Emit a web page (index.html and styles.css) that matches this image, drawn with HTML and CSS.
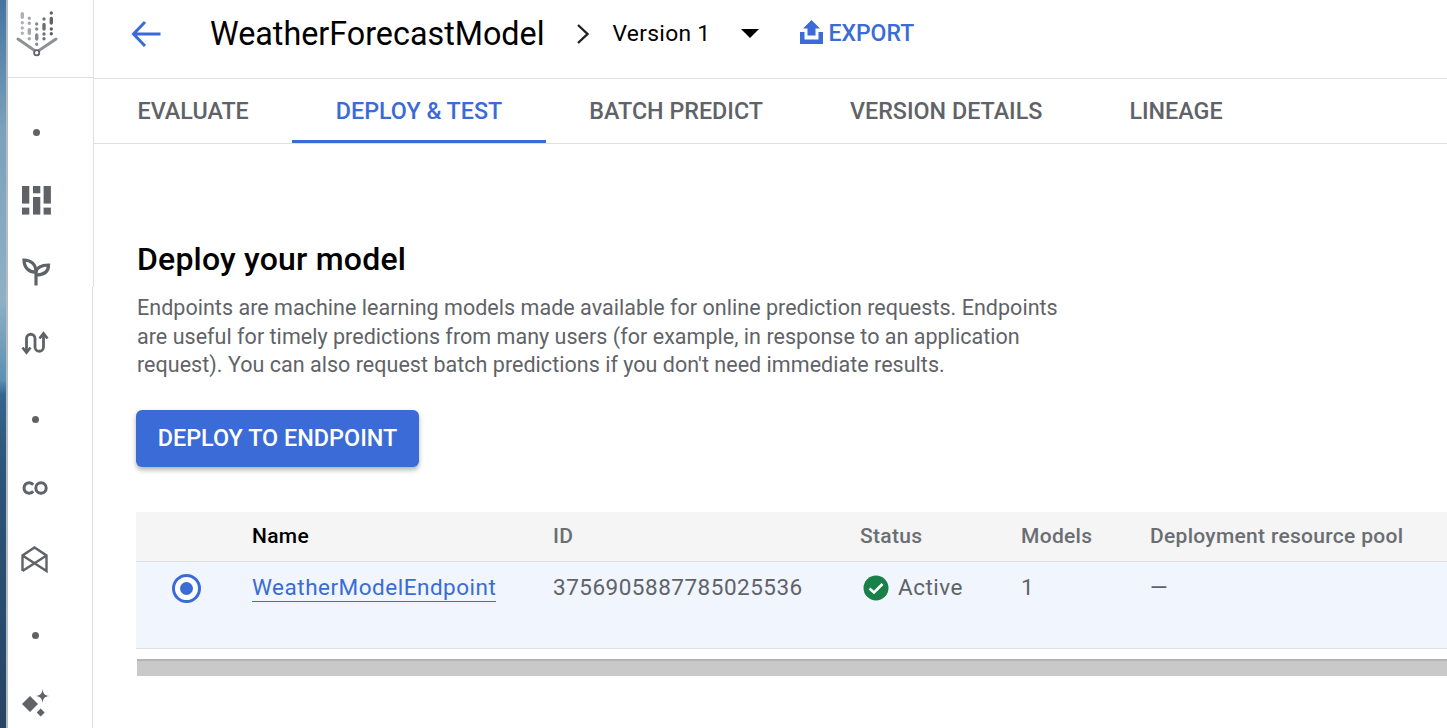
FILE: index.html
```html
<!DOCTYPE html>
<html lang="en">
<head>
<meta charset="utf-8">
<title>WeatherForecastModel</title>
<link rel="stylesheet" href="styles.css">
</head>
<body>
<div class="app">
  <div class="backdrop"></div>
  <nav class="rail">
    <div class="rail-head">
      <svg class="logo" width="50" height="50" viewBox="0 0 50 50">
        <g fill="none" stroke-linecap="round" stroke-width="3.400">
          <path stroke="#aeb0b3" d="M14.300 5.700V9.300M14.300 14.700v.01M14.300 20v.01M14.300 25.300v.01"/>
          <path stroke="#a4a7ab" d="M21.300 10.300v.01M21.300 15.300v.01M21.300 21.700V25.300M21.300 30.700v.01"/>
          <path stroke="#888b90" d="M28.700 16v.01M28.700 21v.01M28.700 27V31M28.700 36.300v.01"/>
          <path stroke="#6d7075" d="M36 11v.01M36 16.400V21M36 26v.01M36 30.700v.01"/>
          <path stroke="#5f6368" d="M43.300 5v.01M43.300 10.400V15M43.300 21v.01M43.300 25.700v.01"/>
        </g>
        <path d="M10 31L28.700 44L48 31" fill="none" stroke="#8d9196" stroke-width="3" stroke-linecap="round"/>
        <circle cx="28.700" cy="44.700" r="2.600" fill="#fff" stroke="#5f6368" stroke-width="1.800"/>
      </svg>
    </div>
    <span class="rail-dot rail-item-a"></span>
    <svg class="rail-icon rail-item-b" width="30" height="30" viewBox="0 0 30 30" fill="#5f6368">
      <rect x="0" y="0" width="7.300" height="17.600"/><rect x="0" y="21.600" width="7.300" height="7"/>
      <rect x="11" y="0" width="7.300" height="7.300"/><rect x="11" y="11" width="7.300" height="17.600"/>
      <rect x="21.600" y="0" width="7.300" height="17.600"/><rect x="21.600" y="21.600" width="7.300" height="7"/>
    </svg>
    <svg class="rail-icon rail-item-c" width="30" height="30" viewBox="0 0 30 30" fill="none" stroke="#5f6368" stroke-width="3.200">
      <path d="M15 28.500V15C8 15.500 3 10.500 3 3C10 3 15 7.500 15 15"/>
      <path d="M15 15.500C15 11 20 8 27.500 8C27.500 15 22.500 18 15 18"/>
    </svg>
    <svg class="rail-icon rail-item-d" width="30" height="30" viewBox="0 0 30 30" fill="none" stroke="#5f6368" stroke-width="2.800">
      <path d="M6.500 24.500V10.500a4.250 4.250 0 0 1 8.500 0V19a4.250 4.250 0 0 0 8.500 0V6"/>
      <path d="M2.500 19.500L6.500 24.500L10.500 19.500"/>
      <path d="M19.500 10.500L23.500 5.500L27.500 10.500"/>
    </svg>
    <span class="rail-dot rail-item-e"></span>
    <svg class="rail-icon rail-item-f" width="30" height="30" viewBox="0 0 30 30" fill="none" stroke="#5f6368" stroke-width="3">
      <path d="M11.200 11.700A5.200 5.200 0 1 0 11.200 18.300"/>
      <circle cx="19" cy="15" r="5.200"/>
    </svg>
    <svg class="rail-icon rail-item-g" width="30" height="30" viewBox="0 0 30 30" fill="none" stroke="#5f6368" stroke-width="2.400">
      <path d="M2.500 27V11.500L14.500 3.500L26.500 11.500V27L2.500 11.500M26.500 11.500L2.500 27"/>
    </svg>
    <span class="rail-dot rail-item-h"></span>
    <svg class="rail-icon rail-item-i" width="30" height="30" viewBox="0 0 30 30" fill="#5f6368">
      <path d="M8 7L16 15L8 23L0 15Z"/>
      <path d="M20.500 0C21 4.500 22.500 6.500 27.200 7C22.500 7.500 21 9.500 20.500 14C20 9.500 18.500 7.500 13.800 7C18.500 6.500 20 4.500 20.500 0Z"/>
      <path d="M18.700 19.500L22.700 23.500L18.700 27.500L14.700 23.500Z"/>
    </svg>
  </nav>
  <main class="main">
    <header class="top">
      <svg class="back" width="30" height="28" viewBox="0 0 30 28" fill="none" stroke="#3a6bd6" stroke-width="3">
        <path d="M29.500 14H3M14 2L2.500 14L14 26"/>
      </svg>
      <h1 class="title">WeatherForecastModel</h1>
      <svg class="crumb" width="14" height="20" viewBox="0 0 14 20" fill="none" stroke="#202124" stroke-width="2.400">
        <path d="M2 1L11.500 10L2 19"/>
      </svg>
      <span class="version">Version 1</span>
      <span class="caret"></span>
      <a class="export">
        <svg width="23" height="24" viewBox="0 0 23 24" fill="#3a6bd6">
          <path d="M11.500 0L20 8.500H15.500V15.500H7.500V8.500H3Z"/>
          <path d="M0 12H4.500V19.500H18.500V12H23V24H0Z"/>
        </svg>
        <span>EXPORT</span>
      </a>
    </header>
    <div class="tabs">
      <span class="tab">EVALUATE</span>
      <span class="tab tab-active">DEPLOY &amp; TEST</span>
      <span class="tab">BATCH PREDICT</span>
      <span class="tab">VERSION DETAILS</span>
      <span class="tab">LINEAGE</span>
    </div>
    <section class="content">
      <h2 class="heading">Deploy your model</h2>
      <p class="intro">Endpoints are machine learning models made available for online prediction requests. Endpoints are useful for timely predictions from many users (for example, in response to an application request). You can also request batch predictions if you don't need immediate results.</p>
      <button class="deploy">DEPLOY TO ENDPOINT</button>
      <div class="table">
        <div class="row row-head">
          <span></span>
          <span class="col-name">Name</span>
          <span>ID</span>
          <span>Status</span>
          <span>Models</span>
          <span>Deployment resource pool</span>
        </div>
        <div class="row row-body">
          <span class="radio"></span>
          <a class="link">WeatherModelEndpoint</a>
          <span>3756905887785025536</span>
          <span class="status">
            <svg width="26" height="26" viewBox="0 0 26 26">
              <circle cx="13" cy="13" r="12.500" fill="#188048"/>
              <path d="M6.500 13.500L11 17.500L19.500 9" fill="none" stroke="#fff" stroke-width="2.600"/>
            </svg>
            Active
          </span>
          <span>1</span>
          <span>—</span>
        </div>
      </div>
      <div class="scrollbar"></div>
    </section>
  </main>
</div>
</body>
</html>
```
FILE: styles.css
```css
* { box-sizing: border-box; }
html, body { margin: 0; height: 100%; overflow: hidden; background: #fff; }
body { font-family: Roboto, "Liberation Sans", sans-serif; color: #5f6368; }

.app { display: flex; height: 728px; width: 1447px; }

.backdrop {
  width: 8px;
  flex: none;
  border-right: 2px solid #b4bbc2;
  background: linear-gradient(180deg, #44749f 0, #7ba1bb 130px, #8db0c4 300px, #5e90b2 380px, #34658c 395px, #2c5578 470px, #2a4c6e 600px, #264464 728px);
}

.rail { position: relative; width: 86px; flex: none; display: flex; flex-direction: column; align-items: flex-start; }
.rail::before { content: ""; position: absolute; left: 85px; top: 0; height: 287px; width: 1px; background: #dfe0e2; }
.rail::after { content: ""; position: absolute; left: 84px; top: 287px; bottom: 0; width: 1px; background: #dadce0; }
.rail-head { width: 100%; height: 78px; border-bottom: 1px solid #dfe0e2; padding: 8px 0 0 0; flex: none; }
.logo { display: block; }

.rail-dot { display: block; width: 7px; height: 7px; border-radius: 50%; background: #5f6368; flex: none; }
.rail-icon { display: block; flex: none; }
.rail-item-a { margin: 51px 0 0 24.500px; }
.rail-item-b { margin: 50px 0 0 14px; }
.rail-item-c { margin: 41px 0 0 13px; }
.rail-item-d { margin: 41px 0 0 12px; }
.rail-item-e { margin: 58px 0 0 23.500px; }
.rail-item-f { margin: 50px 0 0 14px; }
.rail-item-g { margin: 41px 0 0 11.500px; }
.rail-item-h { margin: 58px 0 0 23.500px; }
.rail-item-i { margin: 50px 0 0 14px; }

.main { flex: 1; min-width: 0; display: flex; flex-direction: column; }

.top { height: 79px; flex: none; display: flex; align-items: center; border-bottom: 1px solid #dfe0e2; padding: 0 0 11px 37px; }
.back { flex: none; margin-right: 49px; }
.title { margin: 0; font-size: 32.300px; font-weight: 400; color: #000; white-space: nowrap; }
.crumb { flex: none; margin-left: 31px; }
.version { margin-left: 23px; font-size: 22.800px; color: #000; letter-spacing: .3px; white-space: nowrap; }
.caret { margin-left: 31px; width: 0; height: 0; border-left: 9px solid transparent; border-right: 9px solid transparent; border-top: 9px solid #000; }
.export { margin-left: 41px; display: flex; align-items: center; gap: 5px; color: #3a6bd6; font-size: 23px; font-weight: 500; }
.export svg { display: block; margin-top: -3px; }

.tabs { height: 65px; flex: none; display: flex; border-bottom: 1px solid #dfe0e2; }
.tab { padding: 3px 43.500px 0; height: 64px; display: flex; align-items: center; font-size: 23.300px; font-weight: 500; white-space: nowrap; border-bottom: 3px solid transparent; }
.tab-active { color: #3a6bd6; border-bottom-color: #3a6bd6; }

.content { padding: 96px 0 0 42px; }
.heading { margin: 0 0 0 1px; font-size: 32px; line-height: 38px; font-weight: 500; color: #000; letter-spacing: .2px; }
.intro { margin: 16px 0 0 1px; width: 930px; font-size: 21.500px; line-height: 28.600px; letter-spacing: .03px; }
.deploy {
  display: block;
  margin-top: 30px;
  width: 283px;
  height: 57px;
  border: 0;
  border-radius: 6px;
  background: #3a6bd6;
  color: #fff;
  font-family: inherit;
  font-size: 23.400px;
  font-weight: 500;
  box-shadow: 0 3px 5px rgba(60, 64, 67, .4);
}

.table { margin-top: 45px; }
.row { display: grid; grid-template-columns: 116px 301px 307px 161px 129px 1fr; }
.row > span, .row > a { white-space: nowrap; }
.row-head { height: 50px; background: #f5f5f5; align-items: center; font-size: 21px; letter-spacing: .3px; font-weight: 500; color: #6a6e73; border-bottom: 1px solid #dfe0e2; }
.col-name { color: #000; }
.row-body { height: 87px; padding-top: 12px; background: #f0f5fe; border-bottom: 1px solid #dfe0e2; font-size: 22.500px; letter-spacing: .5px; }
.radio { width: 29px; height: 29px; margin: 0 0 0 36px; border-radius: 50%; border: 3px solid #3a6bd6; background: #fff; position: relative; }
.radio::after { content: ""; position: absolute; inset: 5px; border-radius: 50%; background: #3a6bd6; }
.link { color: #3a6bd6; border-bottom: 1px solid #3a6bd6; justify-self: start; height: 28px; }
.status { display: flex; align-items: flex-start; gap: 9px; padding-left: 3px; }
.status svg { display: block; flex: none; margin-top: 1px; }

.scrollbar { margin: 10px 0 0 1px; height: 17px; background: #c9c9c9; border-top: 2px solid #b5b5b5; }
```
